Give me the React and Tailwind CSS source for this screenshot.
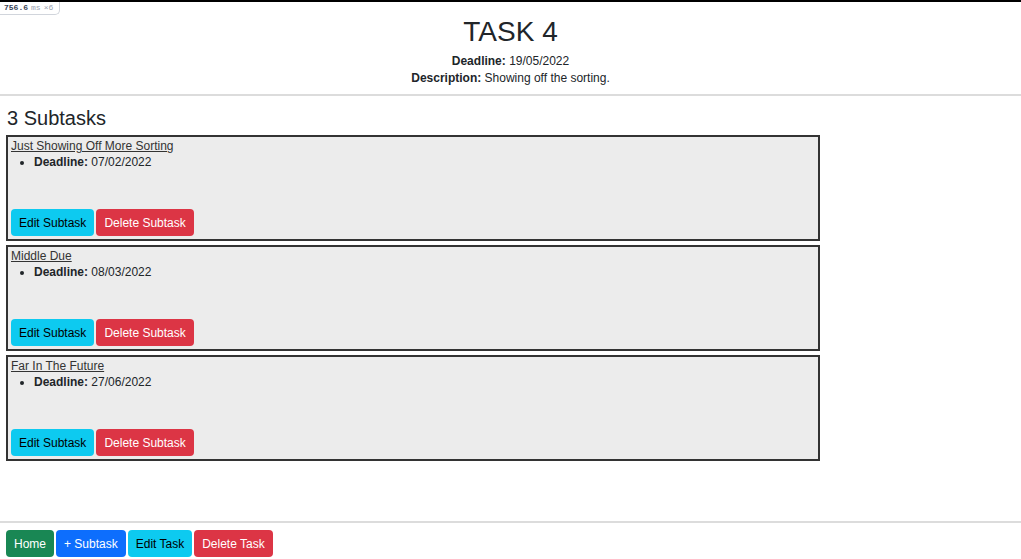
import React from "react";

const subtasks = [
  { name: "Just Showing Off More Sorting", deadline: "07/02/2022" },
  { name: "Middle Due", deadline: "08/03/2022" },
  { name: "Far In The Future", deadline: "27/06/2022" },
];

function Btn({ color, children }) {
  return (
    <button className={`h-[27px] px-2 rounded-[4px] text-[12px] leading-none ${color}`}>
      {children}
    </button>
  );
}

export default function App() {
  return (
    <div
      className="relative w-[1021px] h-[559px] flex flex-col bg-white text-[#212529] overflow-hidden"
      style={{ fontFamily: '"Liberation Sans", Arial, sans-serif' }}
    >
      <div className="h-[2px] bg-black w-full" />
      <div className="absolute top-[2px] left-0 h-[13px] pl-[4px] pr-[6px] bg-white border-r border-b border-gray-300 rounded-br-[5px] flex items-center gap-[3px] text-[8px] text-gray-700" style={{ fontFamily: '"Liberation Mono", monospace' }}>
        <span className="font-bold">756.6</span>
        <span className="text-gray-400">ms</span>
        <span className="text-gray-400">×6</span>
      </div>

      <header className="flex flex-col items-center pt-[14px]">
        <h1 className="text-[28px] leading-[31px] font-medium">TASK 4</h1>
        <p className="text-[12px] leading-[17px] mt-[6px]">
          <b>Deadline:</b> 19/05/2022
        </p>
        <p className="text-[12px] leading-[17px]">
          <b>Description:</b> Showing off the sorting.
        </p>
      </header>
      <div className="h-[2px] bg-[#dcdcdc] mt-[7px]" />

      <main className="px-[6px]">
        <h2 className="text-[20px] leading-[24px] font-medium pl-[1px] mt-[10px] mb-[5px]">3 Subtasks</h2>
        <div className="flex flex-col gap-[4px] w-[814px]">
          {subtasks.map((s) => (
            <div key={s.name} className="h-[106px] border-2 border-[#333] bg-[#ececec] flex flex-col px-[3px] pt-[2px] pb-[3px]">
              <a className="text-[12px] leading-[14px] underline text-[#333] self-start">{s.name}</a>
              <ul className="list-disc pl-[23px] mt-[2px] text-[12px] leading-[14px]">
                <li>
                  <b>Deadline:</b> {s.deadline}
                </li>
              </ul>
              <div className="mt-auto flex gap-[2px]">
                <Btn color="bg-[#0dcaf0] text-black">Edit Subtask</Btn>
                <Btn color="bg-[#dc3545] text-white">Delete Subtask</Btn>
              </div>
            </div>
          ))}
        </div>
      </main>

      <footer className="mt-auto">
        <div className="h-[2px] bg-[#dcdcdc]" />
        <div className="flex gap-[2px] px-[6px] pt-[7px] pb-[2px]">
          <Btn color="bg-[#198754] text-white">Home</Btn>
          <Btn color="bg-[#0d6efd] text-white">+ Subtask</Btn>
          <Btn color="bg-[#0dcaf0] text-black">Edit Task</Btn>
          <Btn color="bg-[#dc3545] text-white">Delete Task</Btn>
        </div>
      </footer>
    </div>
  );
}
